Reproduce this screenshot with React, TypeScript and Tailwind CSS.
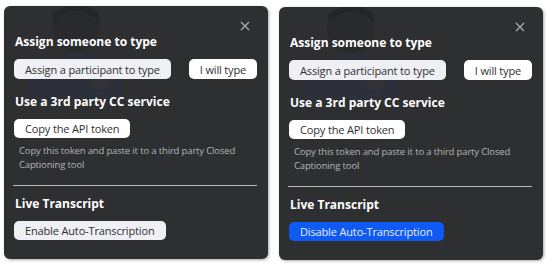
import React from "react";

interface PanelProps {
  transcribing?: boolean;
}

const font = { fontFamily: '"Open Sans", "Noto Sans", sans-serif' };

const Ghost = () => (
  <svg
    className="pointer-events-none absolute left-0 top-0"
    width="140"
    height="120"
    viewBox="0 0 140 120"
  >
    <circle cx="72" cy="22" r="24" fill="#242527" opacity="0.5" />
    <path d="M50 14 Q72 -6 96 16 L94 6 Q72 -10 48 8 Z" fill="#1f2022" opacity="0.45" />
    <path d="M24 92 Q26 52 72 48 Q118 52 120 92 Z" fill="#2b3446" opacity="0.45" />
    <circle cx="96" cy="74" r="10" fill="#5a4a2a" opacity="0.15" />
  </svg>
);

const Pill = ({
  children,
  tone = "light",
  className = "",
}: {
  children: React.ReactNode;
  tone?: "light" | "white" | "blue";
  className?: string;
}) => (
  <button
    className={
      "flex items-center justify-center rounded-[5px] px-[11px] text-[11px] leading-none tracking-[-0.15px] whitespace-nowrap " +
      (tone === "blue"
        ? "bg-[#0e5af2] text-[#e8eeff] "
        : tone === "white"
          ? "bg-white text-[#2f2f33] "
          : "bg-[#eef0f3] text-[#2f2f33] ") +
      className
    }
  >
    {children}
  </button>
);

const Panel = ({ transcribing }: PanelProps) => (
  <div
    className="relative flex h-[253px] w-[264px] flex-col overflow-hidden rounded-[6px] bg-[#2e2f31] px-[10px] pt-[15px] shadow-[1px_1px_3px_rgba(0,0,0,0.35)]"
    style={font}
  >
    <Ghost />
    <div className="relative flex h-[10px] justify-end pr-[8px]">
      <svg width="10" height="10" viewBox="0 0 10 10">
        <path d="M1 1 L9 9 M9 1 L1 9" stroke="#a9abae" strokeWidth="1.3" />
      </svg>
    </div>

    <div className="relative mt-[3px] pl-px text-[12px] font-bold leading-[16px] text-white">
      Assign someone to type
    </div>
    <div className="relative mt-[9px] flex gap-[18px]">
      <Pill className="h-[20px]">Assign a participant to type</Pill>
      <Pill tone="white" className="h-[20px]">
        I will type
      </Pill>
    </div>

    <div className="relative mt-[15px] pl-px text-[12px] font-bold leading-[16px] text-white">
      Use a 3rd party CC service
    </div>
    <div className="relative mt-[9px] flex">
      <Pill tone="white" className="h-[19px]">
        Copy the API token
      </Pill>
    </div>
    <p className="relative mt-[6px] pl-[5px] pr-[8px] text-[9.5px] leading-[14px] tracking-[-0.15px] text-[#b4b5b8]">
      Copy this token and paste it to a third party Closed Captioning tool
    </p>

    <div className="relative -ml-px mr-px mt-[13px] h-px bg-[#b9babd]" />

    <div className="relative mt-[10px] pl-px text-[12px] font-bold leading-[16px] text-white">
      Live Transcript
    </div>
    <div className="relative mt-[9px] flex">
      {transcribing ? (
        <Pill tone="blue" className="h-[19px]">
          Disable Auto-Transcription
        </Pill>
      ) : (
        <Pill className="h-[19px]">Enable Auto-Transcription</Pill>
      )}
    </div>
  </div>
);

export default function App() {
  return (
    <div className="flex h-[265px] w-[552px] gap-[11px] bg-white pl-[4px] pt-[6px]">
      <Panel />
      <div className="pt-px">
        <Panel transcribing />
      </div>
    </div>
  );
}
